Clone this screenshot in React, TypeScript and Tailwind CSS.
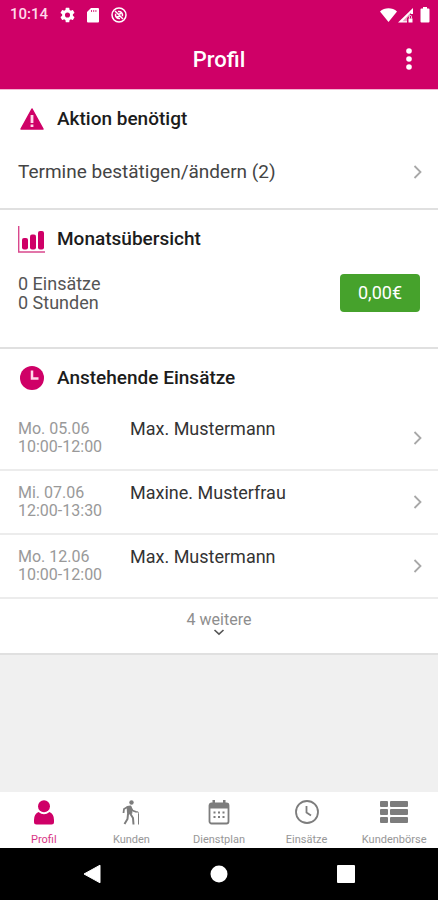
import type { ReactNode } from "react";

const appointments = [
  { date: "Mo. 05.06", time: "10:00-12:00", name: "Max. Mustermann" },
  { date: "Mi. 07.06", time: "12:00-13:30", name: "Maxine. Musterfrau" },
  { date: "Mo. 12.06", time: "10:00-12:00", name: "Max. Mustermann" },
];

const tabs = [
  { label: "Profil", icon: <PersonIcon />, active: true },
  { label: "Kunden", icon: <WalkerIcon /> },
  { label: "Dienstplan", icon: <CalendarIcon /> },
  { label: "Einsätze", icon: <ClockIcon /> },
  { label: "Kundenbörse", icon: <ListIcon /> },
];

export default function App() {
  return (
    <div className="flex min-h-screen flex-col bg-[#f0f0f0] font-[Roboto,sans-serif] text-[#222]">
      <header className="border-b border-[#f3b5d2] bg-[#cf0067] text-white">
        <StatusBar />
        <div className="grid h-[60px] grid-cols-[1fr_auto_1fr] items-center px-5">
          <h1 className="col-start-2 text-[22px] font-medium">Profil</h1>
          <button aria-label="Menü" className="justify-self-end">
            <svg width="18" height="22" viewBox="0 0 18 22" fill="currentColor">
              <circle cx="9" cy="3" r="2.8" />
              <circle cx="9" cy="11" r="2.8" />
              <circle cx="9" cy="19" r="2.8" />
            </svg>
          </button>
        </div>
      </header>

      <main className="flex-1">
        <Section title="Aktion benötigt" icon={<WarningIcon />}>
          <a href="#termine" className="flex h-15 items-center justify-between pr-4 pb-3 pl-[18px]">
            <span className="text-[19px] text-[#444]">Termine bestätigen/ändern (2)</span>
            <ChevronRight />
          </a>
        </Section>

        <Section title="Monatsübersicht" icon={<ChartIcon />}>
          <div className="flex items-start justify-between px-[18px] pt-1.5 pb-[35px]">
            <p className="text-lg leading-[19px] text-[#555]">
              0 Einsätze
              <br />
              0 Stunden
            </p>
            <button className="h-[38px] w-20 rounded bg-[#46a22c] text-lg text-white">
              0,00€
            </button>
          </div>
        </Section>

        <Section title="Anstehende Einsätze" icon={<ClockSolidIcon />}>
          <ul>
            {appointments.map((item) => (
              <li key={item.date} className="border-b-2 border-[#ececec]">
                <a href="#einsatz" className="flex h-[62px] items-center pr-4 pl-[18px]">
                  <span className="w-28 text-base leading-[18px] text-[#999]">
                    {item.date}
                    <br />
                    {item.time}
                  </span>
                  <span className="flex-1 self-start pt-2 text-lg text-[#333]">
                    {item.name}
                  </span>
                  <ChevronRight />
                </a>
              </li>
            ))}
          </ul>
          <button className="flex h-[54px] w-full flex-col items-center pt-3 text-base leading-[18px] text-[#8e8e8e]">
            4 weitere
            <svg width="12" height="7" viewBox="0 0 12 7" fill="none" stroke="#555" strokeWidth="1.6">
              <path d="M1.5 1 6 5.2 10.5 1" />
            </svg>
          </button>
        </Section>
      </main>

      <nav className="grid grid-cols-5 bg-white">
        {tabs.map((tab) => (
          <a
            key={tab.label}
            href="#tab"
            className={`flex h-14 flex-col items-center pt-1 ${
              tab.active ? "text-[#cf0067]" : "text-[#7d7d7d]"
            }`}
          >
            <span className="flex h-8 items-center">{tab.icon}</span>
            <span className="mt-1 text-[11px] leading-4 opacity-80">{tab.label}</span>
          </a>
        ))}
      </nav>

      <SystemBar />
    </div>
  );
}

function Section({ title, icon, children }: { title: string; icon: ReactNode; children: ReactNode }) {
  return (
    <section className="border-b-2 border-[#e0e0e0] bg-white">
      <h2 className="flex h-[58px] items-center gap-3 px-[18px] text-[19px] font-medium text-[#1c1c1c]">
        <span className="flex w-[27px] justify-center">{icon}</span>
        {title}
      </h2>
      {children}
    </section>
  );
}

function StatusBar() {
  return (
    <div className="flex h-[29px] items-center justify-between pr-2 pl-[10px]">
      <div className="flex items-center gap-3">
        <span className="text-[15px] font-medium text-[#ffd9ea]">10:14</span>
        <svg width="15" height="16" viewBox="2 2 20 20" fill="currentColor">
          <path d="M19.14 12.94c.04-.3.06-.61.06-.94s-.02-.64-.07-.94l2.03-1.58a.49.49 0 0 0 .12-.61l-1.92-3.32a.49.49 0 0 0-.59-.22l-2.39.96a7 7 0 0 0-1.62-.94l-.36-2.54a.48.48 0 0 0-.48-.41h-3.84a.48.48 0 0 0-.47.41l-.36 2.54a7.3 7.3 0 0 0-1.62.94l-2.39-.96a.48.48 0 0 0-.59.22L2.74 8.87a.48.48 0 0 0 .12.61l2.03 1.58a6 6 0 0 0 0 1.88l-2.03 1.58a.49.49 0 0 0-.12.61l1.92 3.32c.12.22.37.29.59.22l2.39-.96c.5.38 1.03.7 1.62.94l.36 2.54c.05.24.24.41.48.41h3.84c.24 0 .44-.17.47-.41l.36-2.54a7 7 0 0 0 1.62-.94l2.39.96c.22.08.47 0 .59-.22l1.92-3.32a.48.48 0 0 0-.12-.61zM12 15.4a3.4 3.4 0 1 1 0-6.8 3.4 3.4 0 0 1 0 6.8z" />
        </svg>
        <svg width="12" height="16" viewBox="0 0 12 16">
          <path d="M4 1H11Q12 1 12 2V14.5Q12 15.5 11 15.5H1Q0 15.5 0 14.5V5z" fill="currentColor" />
          <path d="M4.5 3v2M6.7 3v2M8.9 3v2" stroke="#cf0067" strokeWidth=".8" />
        </svg>
        <svg width="16" height="16" viewBox="0 0 16 16" fill="none" stroke="currentColor" strokeWidth="1.5">
          <circle cx="8" cy="8" r="7" />
          <path d="M7 4.5A3.8 3.8 0 0 1 11.4 9.2M9 11.5A3.8 3.8 0 0 1 4.6 6.8M4 4l8 8M7 7.5l3-1M6 10l3-1" />
        </svg>
      </div>
      <div className="flex items-center gap-1.5">
        <svg width="34" height="16" viewBox="0 0 34 16" fill="currentColor">
          <path d="M0 4.5C4.5.2 12.5.2 17 4.5L8.5 15z" />
          <path d="M33 1V7H30.5V5.8L22.6 14.2H27V15.5H18z" />
          <path d="M25 10 30 5.5V8.5L27 11V15H22z" opacity=".6" />
          <path d="M28.5 11.5h4v4h-4z" />
          <path d="M29.5 11.5V9.5q0-1 1-1t1 1v2" fill="none" stroke="currentColor" strokeWidth=".8" />
        </svg>
        <svg width="10" height="16" viewBox="0 0 10 16" fill="currentColor">
          <path d="M3 0h4v1.5h1.5q1 0 1 1v12q0 1-1 1h-7q-1 0-1-1v-12q0-1 1-1H3z" />
        </svg>
      </div>
    </div>
  );
}

function SystemBar() {
  return (
    <div className="grid h-[52px] grid-cols-[1fr_auto_1fr] items-center bg-black px-[83px] text-white">
      <button aria-label="Zurück" className="justify-self-start">
        <svg width="18" height="20" viewBox="0 0 18 20" fill="currentColor">
          <path d="M17 1.2V18.8L1 10z" stroke="currentColor" strokeLinejoin="round" />
        </svg>
      </button>
      <button aria-label="Startbildschirm">
        <svg width="18" height="18" viewBox="0 0 18 18" fill="currentColor">
          <circle cx="9" cy="9" r="8.5" />
        </svg>
      </button>
      <button aria-label="Übersicht" className="justify-self-end">
        <svg width="18" height="18" viewBox="0 0 18 18" fill="currentColor">
          <rect width="18" height="18" rx="1" />
        </svg>
      </button>
    </div>
  );
}

function ChevronRight() {
  return (
    <svg width="9" height="14" viewBox="0 0 9 14" fill="none" stroke="#a8a8a8" strokeWidth="1.8">
      <path d="M1.5 1 7.5 7 1.5 13" />
    </svg>
  );
}

function WarningIcon() {
  return (
    <svg width="24" height="22" viewBox="0 0 24 22">
      <path d="M12 1 23 21H1z" fill="#cf0067" stroke="#cf0067" strokeWidth="1.5" strokeLinejoin="round" />
      <path d="M12 7v8M12 16.5v2.5" stroke="#ffd9ea" strokeWidth="2.8" />
    </svg>
  );
}

function ChartIcon() {
  return (
    <svg width="27" height="27" viewBox="0 0 27 27" fill="#cf0067">
      <path d="M.7 0V26H27" fill="none" stroke="#d9488d" strokeWidth="1.4" />
      <rect x="4" y="12" width="6" height="11.5" rx="2" />
      <rect x="12" y="8.5" width="6" height="15" rx="2" />
      <rect x="20" y="5" width="6" height="18.5" rx="2" />
    </svg>
  );
}

function ClockSolidIcon() {
  return (
    <svg width="24" height="24" viewBox="0 0 24 24">
      <circle cx="12" cy="12" r="12" fill="#cf0067" />
      <path d="M12 4.5V12.5H18.5" fill="none" stroke="#ffd9ea" strokeWidth="2.5" />
    </svg>
  );
}

function PersonIcon() {
  return (
    <svg width="20" height="25" viewBox="0 0 20 25" fill="currentColor">
      <circle cx="10" cy="6.2" r="6" />
      <path d="M4.5 12Q10 16.5 15.5 12Q20 14 20 20V22Q20 24.5 17.5 24.5H2.5Q0 24.5 0 22V20Q0 14 4.5 12z" />
    </svg>
  );
}

function WalkerIcon() {
  return (
    <svg width="18" height="25" viewBox="0 0 18 25" fill="none" stroke="currentColor">
      <circle cx="9.5" cy="2.5" r="2.2" fill="currentColor" stroke="none" />
      <path d="M5.5 7 8.5 6.5 9.5 13 6 14z" fill="currentColor" strokeWidth="1.8" strokeLinejoin="round" />
      <path d="M5.5 7 2 9 1.5 13M8.5 7 10.5 10.5 14.5 12" strokeWidth="1.8" />
      <path d="M6 14 5.5 19 2.5 24M8.5 14 11 18 11.5 24.5" strokeWidth="2" />
      <path d="M14 12Q16.5 10.8 16.5 13.5V24.5" strokeWidth="1" />
    </svg>
  );
}

function CalendarIcon() {
  return (
    <svg width="22" height="25" viewBox="0 0 22 25" fill="currentColor">
      <rect x="1.5" y="3.5" width="19" height="20" rx="2" fill="none" stroke="currentColor" strokeWidth="1.8" />
      <path d="M1.5 3.5h19v5h-19zM4.5 0h2.5v4H4.5zM15 0h2.5v4H15z" />
      <path d="M5.5 11.5h2v2h-2zM10 11.5h2v2h-2zM14.5 11.5h2v2h-2zM5.5 16h2v2h-2zM10 16h2v2h-2zM14.5 16h2v2h-2z" />
    </svg>
  );
}

function ClockIcon() {
  return (
    <svg width="24" height="24" viewBox="0 0 24 24" fill="none" stroke="currentColor" strokeWidth="1.8">
      <circle cx="12" cy="12" r="11" />
      <path d="M11.5 6V12.5L16 15.5" />
    </svg>
  );
}

function ListIcon() {
  return (
    <svg width="28" height="22" viewBox="0 0 28 22" fill="currentColor">
      <rect width="8" height="6" rx="1" />
      <rect x="10" width="18" height="6" rx="1" />
      <rect y="8" width="8" height="6" rx="1" />
      <rect x="10" y="8" width="18" height="6" rx="1" />
      <rect y="16" width="8" height="6" rx="1" />
      <rect x="10" y="16" width="18" height="6" rx="1" />
    </svg>
  );
}
